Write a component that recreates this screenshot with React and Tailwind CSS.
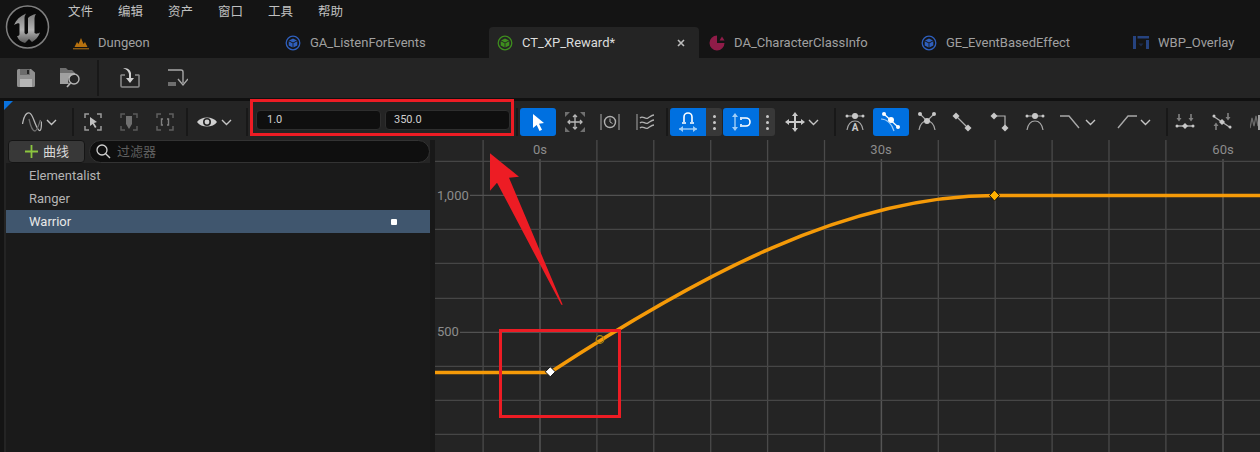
import React from "react";

const FONT = { fontFamily: '"Roboto","Noto Sans CJK SC",sans-serif' };

const Chev = ({ className = "" }) => (
  <svg width="11" height="7" viewBox="0 0 11 7" className={className} fill="none" stroke="#c4c4c4" strokeWidth="1.4">
    <path d="M1 1l4.5 4.5L10 1" />
  </svg>
);

const Sep = ({ className = "" }) => <div className={`w-[2px] h-[28px] bg-[#181818] ${className}`} />;

const Logo = () => (
  <svg width="46" height="46" viewBox="0 0 46 46">
    <defs>
      <linearGradient id="ug" x1="0" y1="0" x2="0" y2="1">
        <stop offset="0" stopColor="#7c7c7c" />
        <stop offset="0.55" stopColor="#b4b4b4" />
        <stop offset="1" stopColor="#5c5c5c" />
      </linearGradient>
    </defs>
    <circle cx="23.500" cy="23" r="21" fill="#0b0b0b" stroke="#808080" strokeWidth="1.500" />
    <path
      fill="url(#ug)"
      d="M10 21C12 16 16 12 22 9.500C20.500 12 20.500 13 20.500 15V29L22 30.500L24 29V14C26 12 29 10.500 32 10C30.500 12 30.500 14 30.500 16V29C32 30 33.500 30 36 28.500C34.500 33 31.500 36 28 38L25 35L21 39C17 38 14.500 36 13 32C14.500 32 15.500 31.500 15.500 30V20C15.500 18.500 13 19 10 21z"
    />
  </svg>
);

const Cube = ({ color }) => (
  <svg width="16" height="16" viewBox="0 0 16 16">
    <circle cx="8" cy="8" r="6.8" fill="none" stroke={color} strokeWidth="1.3" />
    <path d="M8 3.400l4 2.100L8 7.600 4 5.500z" fill={color} />
    <path d="M3.700 6.200l3.900 2.100v4.200l-3.900-2.100zM12.300 6.200L8.400 8.300v4.200l3.900-2.100z" fill={color} />
  </svg>
);

const TabIcon = ({ kind }) => {
  if (kind === "level")
    return (
      <svg width="16" height="16" viewBox="0 0 16 16">
        <path d="M1.500 12L4 7l1.500 2L8 3l2.500 6 1.500-2 2.500 5z" fill="#b8720f" />
        <rect x="0" y="13" width="16" height="1.400" fill="#8a5a14" />
      </svg>
    );
  if (kind === "blue") return <Cube color="#2f5fbd" />;
  if (kind === "green") return <Cube color="#3e8e1e" />;
  if (kind === "data")
    return (
      <svg width="16" height="16" viewBox="0 0 16 16">
        <path d="M8 .5a7.500 7.500 0 1 0 7.500 7.500H8z" fill="#8f1c48" />
        <path d="M10.500 5.500L13 1.500l2.500 4z" fill="#8f1c48" />
      </svg>
    );
  return (
    <svg width="16" height="14" viewBox="0 0 16 14">
      <path d="M0 0h3v13H0zM4.500 0H16v2.500H4.500zM13 4h3v9h-3z" fill="#26437f" />
      <path d="M5.500 7.500h5L8 10.500z" fill="#1d2b4a" />
    </svg>
  );
};

const tabs = [
  { k: "level", t: "Dungeon" },
  { k: "blue", t: "GA_ListenForEvents" },
  { k: "green", t: "CT_XP_Reward*", active: true },
  { k: "data", t: "DA_CharacterClassInfo" },
  { k: "blue", t: "GE_EventBasedEffect" },
  { k: "wbp", t: "WBP_Overlay" },
];

const G = { fill: "none", stroke: "#b0b0b0", strokeWidth: 1.4 };

const I = ({ w = 20, h = 20, children, className = "" }) => (
  <svg width={w} height={h} viewBox={`0 0 ${w} ${h}`} className={`shrink-0 ${className}`}>
    {children}
  </svg>
);

const Corners = ({ c = "#9a9a9a" }) => (
  <path d="M1 5V1h4M13 1h4v4M17 13v4h-4M5 17H1v-4" fill="none" stroke={c} strokeWidth="1.500" />
);

const Dia = ({ x, y, r = 3, c = "#c8c8c8" }) => (
  <path d={`M${x} ${y - r}l${r} ${r}-${r} ${r}-${r}-${r}z`} fill={c} />
);

const BlueBtn = ({ children, className = "" }) => (
  <div className={`w-[36px] h-[28px] bg-[#0070e0] rounded-[3px] flex items-center justify-center shrink-0 ${className}`}>{children}</div>
);

const Dots = () => (
  <div className="w-[16px] h-[28px] bg-[#383838] rounded-r-[3px] flex flex-col items-center justify-center gap-[3px] shrink-0">
    <div className="w-[3px] h-[3px] rounded-full bg-[#c8c8c8]" />
    <div className="w-[3px] h-[3px] rounded-full bg-[#c8c8c8]" />
    <div className="w-[3px] h-[3px] rounded-full bg-[#c8c8c8]" />
  </div>
);

const Arc = ({ c = "#a8a8a8" }) => <path d="M2 19c1-6 4-9 8-9s7 3 8 9" fill="none" stroke={c} strokeWidth="1.200" />;

const Toolbar = () => (
  <div className="h-[39px] flex items-center pl-[18px] pt-[3px] bg-[#242424] relative overflow-hidden">
    <div className="absolute left-0 top-0 w-0 h-0 border-t-[9px] border-t-[#0a72dd] border-r-[9px] border-r-transparent" />
    <I w={20} h={20}>
      <path d="M0.500 12C2 3 5 0 7.500 1S11 6 13 11s3.500 8 5 7.500 1.500-5 1.500-9" fill="none" stroke="#b8b8b8" strokeWidth="1.300" />
      <path d="M7 7c1.500 7 4 12 6 12s3-4 5.500-11" fill="none" stroke="#6e6e6e" strokeWidth="1.300" />
    </I>
    <Chev className="ml-[4px]" />
    <Sep className="ml-[15px]" />
    <I w={18} h={18} className="ml-[10px]">
      <Corners />
      <path d="M6 4l7 5-3 1 2.500 4-1.500 1-2.300-4L6 13z" fill="#c0c0c0" />
    </I>
    <I w={18} h={18} className="ml-[18px]">
      <Corners c="#5a5a5a" />
      <path d="M6 3h6v8l-3 5-3-5z" fill="#707070" />
    </I>
    <I w={18} h={18} className="ml-[18px]">
      <Corners c="#5f5f5f" />
      <path d="M7 6H5.500v6H7M11 6h1.500v6H11" fill="none" stroke="#808080" strokeWidth="1.400" />
    </I>
    <Sep className="ml-[12px]" />
    <I w={20} h={14} className="ml-[9px]">
      <path d="M0 7c4-6 16-6 20 0-4 6-16 6-20 0z" fill="#d0d0d0" />
      <circle cx="10" cy="7" r="4" fill="#242424" />
      <circle cx="10" cy="7" r="2.400" fill="#d0d0d0" />
    </I>
    <Chev className="ml-[4px]" />
    <Sep className="ml-[14px]" />
    <div className="ml-[8px] mb-[4px] flex gap-[4px]">
      <div className="w-[125px] h-[20px] bg-[#0f0f0f] border border-[#2e2e2e] rounded-[4px] pl-[10px] text-[11px] leading-[18px] text-[#d0d0d0]">1.0</div>
      <div className="w-[125px] h-[20px] bg-[#0f0f0f] border border-[#2e2e2e] rounded-[4px] pl-[8px] text-[11px] leading-[18px] text-[#d0d0d0]">350.0</div>
    </div>
    <Sep className="ml-[6px]" />
    <BlueBtn className="ml-[2px]">
      <I w={14} h={18}>
        <path d="M2 1l11 9-5 .7 3 6-2.500 1.200-2.800-6L2 15z" fill="#fff" />
      </I>
    </BlueBtn>
    <I w={20} h={20} className="ml-[9px]">
      <path d="M0 0h5L0 5zM20 0v5l-5-5zM0 20v-5l5 5zM20 20h-5l5-5z" fill="#707070" />
      <path d="M10 3v14M3 10h14M8 5l2-2 2 2M8 15l2 2 2-2M5 8l-2 2 2 2M15 8l2 2-2 2" fill="none" stroke="#b8b8b8" strokeWidth="1.300" />
    </I>
    <I w={20} h={20} className="ml-[15px]">
      <path d="M1 2v16M19 2v16" stroke="#8a8a8a" strokeWidth="1.300" />
      <circle cx="10" cy="10" r="5.500" {...G} />
      <path d="M10 6.500V10l2.500 1.500" {...G} strokeWidth="1" />
    </I>
    <I w={20} h={20} className="ml-[16px]">
      <path d="M1 2v16" stroke="#8a8a8a" strokeWidth="1.300" />
      <path d="M4 6c3-3 5 2 8 0s4-3 6-3M4 11c3-3 5 2 8 0s4-3 6-3M4 16c3-3 5 2 8 0s4-3 6-3" {...G} />
    </I>
    <Sep className="ml-[10px]" />
    <div className="ml-[2px] flex shrink-0">
      <BlueBtn className="rounded-r-none">
        <I w={20} h={22}>
          <path d="M6 11V6a4 4 0 0 1 8 0v5M4 12h4M12 12h4" fill="none" stroke="#fff" strokeWidth="1.600" />
          <path d="M1 18h18" stroke="#9fcdf6" strokeWidth="1.400" />
          <path d="M5 15l-4 3 4 3zM15 15l4 3-4 3z" fill="#9fcdf6" />
        </I>
      </BlueBtn>
      <Dots />
    </div>
    <div className="ml-[1px] flex shrink-0">
      <BlueBtn className="rounded-r-none">
        <I w={20} h={22}>
          <path d="M4 3v16" stroke="#9fcdf6" strokeWidth="1.400" />
          <path d="M1 6l3-4 3 4zM1 16l3 4 3-4z" fill="#9fcdf6" />
          <path d="M11 7h4a4 4 0 0 1 0 8h-4M10 6v3M10 13v3" fill="none" stroke="#fff" strokeWidth="1.600" />
        </I>
      </BlueBtn>
      <Dots />
    </div>
    <I w={20} h={20} className="ml-[10px]">
      <path d="M10 2v16M2 10h16" stroke="#c8c8c8" strokeWidth="2" />
      <path d="M7 4l3-4 3 4zM7 16l3 4 3-4zM4 7l-4 3 4 3zM16 7l4 3-4 3z" fill="#c8c8c8" />
    </I>
    <Chev className="ml-[3px]" />
    <Sep className="ml-[15px]" />
    <I w={20} h={22} className="ml-[9px]">
      <Arc />
      <path d="M1 5h18" stroke="#b0b0b0" strokeWidth="1" />
      <circle cx="10" cy="5" r="3" fill="#c8c8c8" />
      <circle cx="2" cy="5" r="1.500" fill="#c8c8c8" />
      <circle cx="18" cy="5" r="1.500" fill="#c8c8c8" />
      <text x="10" y="20" textAnchor="middle" fontSize="10" fontWeight="700" fill="#c8c8c8" fontFamily="Roboto">A</text>
    </I>
    <BlueBtn className="ml-[8px]">
      <I w={22} h={22}>
        <path d="M4 3l14 13" stroke="#fff" strokeWidth="1.200" />
        <circle cx="4" cy="3" r="2" fill="#fff" />
        <circle cx="18" cy="16" r="2" fill="#fff" />
        <circle cx="11" cy="9" r="3" fill="#fff" />
        <path d="M1 8c6 0 11 5 13 12" fill="none" stroke="#9fcdf6" strokeWidth="1.200" />
      </I>
    </BlueBtn>
    <I w={20} h={22} className="ml-[8px]">
      <Arc />
      <path d="M3 3l7 7 7-7" stroke="#b0b0b0" strokeWidth="1.100" fill="none" />
      <circle cx="3" cy="3" r="2" fill="#c8c8c8" />
      <circle cx="17" cy="3" r="2" fill="#c8c8c8" />
      <circle cx="10" cy="10" r="3" fill="#c8c8c8" />
    </I>
    <I w={20} h={20} className="ml-[15px]">
      <path d="M4 4l12 12" stroke="#b0b0b0" strokeWidth="1.200" />
      <Dia x={4} y={4} r={3.500} />
      <Dia x={16} y={16} r={3.500} />
    </I>
    <I w={20} h={20} className="ml-[18px]">
      <path d="M4 4h11v12" stroke="#b0b0b0" strokeWidth="1.200" fill="none" />
      <Dia x={4} y={4} r={3.500} />
      <Dia x={15} y={16} r={3.500} />
    </I>
    <I w={20} h={22} className="ml-[15px]">
      <Arc />
      <path d="M1 5h18" stroke="#b0b0b0" strokeWidth="1" />
      <circle cx="10" cy="5" r="3" fill="#c8c8c8" />
      <circle cx="2" cy="5" r="1.500" fill="#c8c8c8" />
      <circle cx="18" cy="5" r="1.500" fill="#c8c8c8" />
    </I>
    <I w={20} h={16} className="ml-[15px]">
      <path d="M0 2h9l10 12" stroke="#a8a8a8" strokeWidth="1.400" fill="none" />
    </I>
    <Chev className="ml-[5px]" />
    <I w={20} h={16} className="ml-[21px]">
      <path d="M1 14L11 2h9" stroke="#a8a8a8" strokeWidth="1.400" fill="none" />
    </I>
    <Chev className="ml-[3px]" />
    <Sep className="ml-[15px]" />
    <I w={20} h={20} className="ml-[7px]">
      <path d="M1 14h18" stroke="#b0b0b0" strokeWidth="1.400" />
      <circle cx="2" cy="14" r="1.500" fill="#c8c8c8" />
      <circle cx="18" cy="14" r="1.500" fill="#c8c8c8" />
      <Dia x={10} y={14} r={3} />
      <path d="M4 2v6M16 2v6" stroke="#808080" strokeWidth="1.600" />
      <path d="M1.500 6L4 9.500 6.500 6zM13.500 6l2.500 3.500L18.500 6z" fill="#808080" />
    </I>
    <I w={20} h={20} className="ml-[17px]">
      <path d="M1 4l18 12" stroke="#b0b0b0" strokeWidth="1.400" />
      <circle cx="2" cy="4" r="1.500" fill="#c8c8c8" />
      <circle cx="18" cy="15" r="1.500" fill="#c8c8c8" />
      <Dia x={10} y={10} r={3} />
      <path d="M16 1v6M4 12v6" stroke="#808080" strokeWidth="1.600" />
      <path d="M13.500 5L16 8.500 18.500 5zM1.500 14L4 10.500 6.500 14z" fill="#808080" />
    </I>
    <I w={10} h={20} className="ml-[18px]">
      <path d="M0 16l2-10 2 8 2-10 2 10" stroke="#6a6a6a" strokeWidth="1.300" fill="none" />
      <rect x="8" y="3" width="2" height="15" fill="#a0a0a0" />
    </I>
  </div>
);

const xs = [-1, 1, 2, 3, 4, 5, 7, 8, 9, 10, 11].map((k) => 540 + 56.9 * k);
const ys = [161.3, 195.3, 229.3, 263.3, 298.3, 332.3, 366.3, 400.3, 434.3];

const Chart = () => (
  <svg viewBox="435 140 825 312" className="flex-1 h-[312px] block bg-[#242424]">
    {xs.map((x) => (
      <line key={x} x1={x} x2={x} y1="140" y2="452" stroke="#4a4a4a" strokeWidth="1.300" />
    ))}
    {[540, 881.4, 1223].map((x) => (
      <line key={x} x1={x} x2={x} y1="159" y2="452" stroke="#555555" strokeWidth="1.500" />
    ))}
    {ys.map((y, i) => (
      <line key={y} x1={i === 1 ? 470 : i === 5 ? 460 : 435} x2="1260" y1={y} y2={y} stroke={i === 1 || i === 5 ? "#525252" : "#464646"} strokeWidth="1.300" />
    ))}
    <g fontFamily="Roboto" fontSize="13" fill="#8c8c8c">
      <text x="540" y="154" textAnchor="middle">0s</text>
      <text x="881" y="154" textAnchor="middle">30s</text>
      <text x="1223" y="154" textAnchor="middle">60s</text>
      <text x="437" y="200">1,000</text>
      <text x="437" y="336">500</text>
    </g>
    <path d="M435 372.500H550C698 276 846 195.500 995 195.500H1260" fill="none" stroke="#f59a08" strokeWidth="3.600" />
    <circle cx="600" cy="339.500" r="3.800" fill="none" stroke="#b08a10" strokeWidth="1.200" />
    <path d="M550.300 366.800l5 5-5 5-5-5z" fill="#fff" stroke="#111" strokeWidth="1" />
    <path d="M994.500 190l5 5.500-5 5.500-5-5.500z" fill="#ffb000" stroke="#111" strokeWidth="1" />
  </svg>
);

export default function App() {
  return (
    <div className="w-[1260px] h-[452px] overflow-hidden relative flex flex-col bg-[#141414]" style={FONT}>
      <div className="flex h-[58px] bg-[#141414] shrink-0">
        <div className="w-[65px] pl-[4px] pt-[4px] shrink-0">
          <Logo />
        </div>
        <div className="flex-1 flex flex-col">
          <div className="h-[27px] flex items-start gap-[25px] pl-[3px] pt-[3px] text-[12.5px] leading-[17px] text-[#c0c0c0]">
            {["文件", "编辑", "资产", "窗口", "工具", "帮助"].map((m) => (
              <span key={m}>{m}</span>
            ))}
          </div>
          <div className="h-[31px] flex gap-[2px]">
            {tabs.map((t) => (
              <div
                key={t.t}
                className={`w-[210px] shrink-0 flex items-center pl-[8px] pt-[1px] gap-[9px] text-[13px] rounded-t-[4px] relative ${t.active ? "bg-[#242424] text-[#dcdcdc]" : "text-[#a0a0a0]"}`}
              >
                <span className="w-[16px] flex justify-center shrink-0">
                  <TabIcon kind={t.k} />
                </span>
                <span className="whitespace-nowrap">{t.t}</span>
                {t.active && (
                  <svg width="8" height="8" viewBox="0 0 8 8" className="absolute right-[14px] top-[12px]">
                    <path d="M1 1l6 6M7 1L1 7" stroke="#bdbdbd" strokeWidth="1.600" />
                  </svg>
                )}
              </div>
            ))}
          </div>
        </div>
      </div>

      <div className="h-[40px] bg-[#242424] flex items-center shrink-0 pl-[17px]">
        <svg width="18" height="18" viewBox="0 0 18 18">
          <path d="M0 1.500A1.500 1.500 0 0 1 1.500 0H14l4 3.500V16.500A1.500 1.500 0 0 1 16.500 18h-15A1.500 1.500 0 0 1 0 16.500z" fill="#8f8f8f" />
          <rect x="3" y="0" width="10" height="6" fill="#6c6c6c" />
          <rect x="10" y="1" width="2" height="4" fill="#242424" />
          <rect x="3" y="10" width="12" height="8" fill="#b5b5b5" />
        </svg>
        <svg width="21" height="22" viewBox="0 0 21 22" className="ml-[25px]">
          <path d="M0 1h6l2 2h4l3 3H0z" fill="#6f6f6f" />
          <path d="M0 6h15v2a6 6 0 0 0-6 9H0z" fill="#a0a0a0" />
          <circle cx="14" cy="12" r="5" fill="none" stroke="#b5b5b5" strokeWidth="1.400" />
          <path d="M10.500 16L7 20" stroke="#b5b5b5" strokeWidth="1.600" />
        </svg>
        <div className="w-[2px] h-[36px] bg-[#181818] ml-[16px]" />
        <svg width="20" height="20" viewBox="0 0 20 20" className="ml-[21px]">
          <path d="M5 7H1.500A.8.8 0 0 0 1 8v10a1 1 0 0 0 1 1h16a1 1 0 0 0 1-1V8a.8.8 0 0 0-.5-1H15" fill="none" stroke="#8c8c8c" strokeWidth="1.500" />
          <path d="M3 0c4 0 7 1 8 5v5h3l-4 5-4-5h3V6c-.5-3-3-5-6-6z" fill="#d0d0d0" />
        </svg>
        <svg width="20" height="18" viewBox="0 0 20 18" className="ml-[28px]">
          <path d="M0 1h13a2 2 0 0 1 2 2v11" fill="none" stroke="#a8a8a8" strokeWidth="1.400" />
          <path d="M10 10l5 6 5-6" fill="none" stroke="#a8a8a8" strokeWidth="1.400" />
          <rect x="0" y="13" width="8" height="4" fill="#6e6e6e" />
        </svg>
      </div>

      <div className="h-[3px] bg-[#101010] shrink-0" />

      <div className="flex-1 flex flex-col pl-[4px]">
        <Toolbar />
        <div className="flex h-[312px]">
          <div className="w-[426px] shrink-0 bg-[#242424] flex flex-col">
            <div className="h-[23px] flex gap-[4px] pl-[4px] shrink-0">
              <div className="w-[77px] h-[23px] bg-[#383838] border border-[#151515] rounded-[4px] flex items-center pl-[16px] gap-[5px] text-[13px] text-[#d8d8d8]">
                <svg width="13" height="13" viewBox="0 0 13 13" className="shrink-0">
                  <path d="M6.500 0v13M0 6.500h13" stroke="#8cc63f" strokeWidth="1.800" />
                </svg>
                <span>曲线</span>
              </div>
              <div className="flex-1 h-[23px] bg-[#0f0f0f] border border-[#333333] rounded-full flex items-center pl-[6px] gap-[6px] text-[13px] text-[#5f5f5f]">
                <svg width="15" height="15" viewBox="0 0 15 15" className="shrink-0">
                  <circle cx="6" cy="6" r="5" fill="none" stroke="#d0d0d0" strokeWidth="1.300" />
                  <path d="M9.700 9.700L14 14" stroke="#d0d0d0" strokeWidth="1.400" />
                </svg>
                <span>过滤器</span>
              </div>
            </div>
            <div className="flex-1 ml-[2px] bg-[#1a1a1a] pt-[1px] text-[13px] text-[#b4b4b4]">
              <div className="h-[23px] pl-[23px] pt-[1px] flex items-center">Elementalist</div>
              <div className="h-[23px] pl-[23px] pt-[1px] flex items-center">Ranger</div>
              <div className="h-[23px] pl-[23px] pt-[1px] pr-[33px] flex items-center justify-between bg-[#40566e] text-[#e8e8e8]">
                <span>Warrior</span>
                <span className="w-[6px] h-[6px] bg-white rounded-[1px]" />
              </div>
            </div>
          </div>
          <div className="w-[5px] shrink-0 bg-[#181818]" />
          <Chart />
        </div>
      </div>

      <div className="absolute left-[250px] top-[99px] w-[264px] h-[37px] border-[3px] border-[#ed1c24]" />
      <div className="absolute left-[499px] top-[329px] w-[122px] h-[89px] border-[3px] border-[#ed1c24]" />
      <svg className="absolute left-[485px] top-[150px]" width="85" height="160" viewBox="485 150 85 160">
        <polygon points="490,153.300 519,176.700 509,177.700 562.700,304.700 561.300,304.700 497,182.700 490,190.700" fill="#ed1c24" />
      </svg>
    </div>
  );
}
